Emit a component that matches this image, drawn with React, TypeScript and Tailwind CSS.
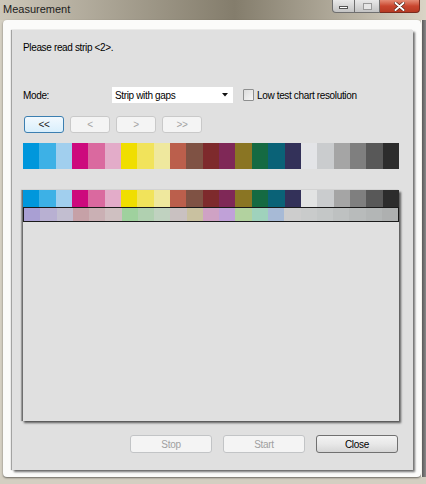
import React from 'react'

const STRIP = [
  '#0097dc', '#3db1e6', '#a1cfee', '#cd0a7d', '#da699f', '#e3acc9',
  '#f0de00', '#f1e35b', '#efe89e', '#bb5f4c', '#7f5244', '#7e2a2c',
  '#7f2857', '#8a7523', '#156a42', '#0a6277', '#333159', '#e3e4e7',
  '#caccce', '#a5a5a5', '#7f7f7f', '#585858', '#2c2c2c',
]

const READINGS = [
  '#a99fd3', '#b8b0d2', '#c2bed0', '#c6a1a7', '#cab0b4', '#cfc0c1',
  '#9fd19e', '#b0d0b0', '#c0d2c0', '#c9c1c1', '#c9c1a0', '#cfa2c4',
  '#c0a1d8', '#b2d29f', '#9fd2bc', '#a7bad6', '#cdcdcd', '#c9cbcb',
  '#c4c7c7', '#bec1c1', '#b8bbbb', '#b3b6b6', '#aeb0b0',
]

const font = { fontFamily: '"Liberation Sans", Arial, sans-serif' }

function NavButton({ label, active }: { label: string; active?: boolean }) {
  return (
    <div
      className={`w-[40px] h-[17px] flex items-center justify-center rounded-[3px] border text-[10px] ${
        active
          ? 'border-[#3c7fb1] bg-gradient-to-b from-[#f2f9fe] to-[#d9effc] text-[#1b1b1b]'
          : 'border-[#c9c9c9] bg-[#f4f4f4] text-[#a3a3a3]'
      }`}
    >
      {label}
    </div>
  )
}

function DialogButton({ label, enabled }: { label: string; enabled?: boolean }) {
  return (
    <div
      className={`w-[82px] h-[18px] flex items-center justify-center rounded-[3px] border text-[10px] tracking-[-0.3px] ${
        enabled
          ? 'border-[#707070] bg-gradient-to-b from-[#f3f3f3] via-[#e8e8e8] to-[#d6d6d6] text-black'
          : 'border-[#c2c4c6] bg-[#f4f4f4] text-[#a0a0a0]'
      }`}
    >
      {label}
    </div>
  )
}

function Strip({ colors, className }: { colors: string[]; className: string }) {
  return (
    <div className={`flex ${className}`}>
      {colors.map((c, i) => (
        <div key={i} className="flex-1" style={{ background: c }} />
      ))}
    </div>
  )
}

export default function App() {
  return (
    <div className="w-[426px] h-[484px] bg-[#d4cfc2] flex flex-col overflow-hidden" style={font}>
      {/* Title bar */}
      <div className="h-[20px] flex items-start justify-between bg-gradient-to-r from-[#cdc7b9] via-[#847d6c] via-55% to-[#dad4c6]">
        <span className="pl-[3px] pt-[3px] text-[11px] leading-[12px] text-[#1c1c1c]">Measurement</span>
        <div className="flex pr-[6px]">
          <div className="w-[23px] h-[13px] border border-t-0 border-[#6f6f6f] rounded-bl-[4px] bg-gradient-to-b from-[#e9e9e9] to-[#c4c4c4] flex items-end justify-center pb-[3px]">
            <div className="w-[9px] h-[3px] bg-white border border-[#555]" />
          </div>
          <div className="w-[25px] h-[13px] border border-t-0 border-l-0 border-[#6f6f6f] bg-gradient-to-b from-[#e9e9e9] to-[#c4c4c4] flex items-center justify-center">
            <div className="w-[9px] h-[7px] border border-[#9a9a9a] bg-[#e6e6e6]" />
          </div>
          <div className="w-[40px] h-[13px] border border-t-0 border-l-0 border-[#7a2b1e] rounded-br-[4px] bg-gradient-to-b from-[#e48c76] via-[#c9462f] to-[#b73a23] flex items-center justify-center">
            <svg width="11" height="9" viewBox="0 0 11 9">
              <path d="M1.5 1 L9.5 8 M9.5 1 L1.5 8" stroke="#4a1a10" strokeWidth="3.2" strokeLinecap="round" />
              <path d="M1.5 1 L9.5 8 M9.5 1 L1.5 8" stroke="#ffffff" strokeWidth="2" strokeLinecap="round" />
            </svg>
          </div>
        </div>
      </div>

      {/* Frame body */}
      <div className="flex h-[457px]">
        <div className="w-[3px]" />
        <div className="w-[418px] bg-[#fbfbfa] rounded-[4px] pt-[10px] pl-[9px] shadow-[0_1px_2px_rgba(0,0,0,0.5)]">
          {/* Client panel */}
          <div className="w-[401px] h-[440px] bg-[#e0e0e0] pt-[12px] px-[11px] text-[10px] text-black shadow-[-1px_0_1px_rgba(0,0,0,0.35),2px_2px_2px_rgba(0,0,0,0.55)] tracking-[-0.35px]">
            <div className="h-[12px] leading-[12px]">Please read strip &lt;2&gt;.</div>

            <div className="mt-[33px] h-[16px] flex items-center">
              <span className="w-[89px]">Mode:</span>
              <div className="w-[121px] h-[16px] bg-white flex items-center justify-between pl-[3px] pr-[5px]">
                <span>Strip with gaps</span>
                <svg width="6" height="4" viewBox="0 0 6 4">
                  <path d="M0 0 H6 L3 3.5 Z" fill="#111" />
                </svg>
              </div>
              <div className="ml-[10px] w-[11px] h-[12px] border border-[#8e8f8f] rounded-[1px] bg-gradient-to-br from-[#dcdcdc] to-[#f6f6f6]" />
              <span className="ml-[3px]">Low test chart resolution</span>
            </div>

            <div className="mt-[13px] ml-[1px] flex gap-[6px]">
              <NavButton label="<<" active />
              <NavButton label="<" />
              <NavButton label=">" />
              <NavButton label=">>" />
            </div>

            <Strip colors={STRIP} className="mt-[10px] w-[376px] h-[26px]" />

            {/* Reading panel */}
            <div className="mt-[21px] -ml-[1px] w-[377px] h-[231px] bg-[#e0e0e0] border-l border-[#6f6f6f] shadow-[-1px_0_1px_rgba(0,0,0,0.3),2px_2px_2px_rgba(0,0,0,0.6)]">
              <Strip colors={STRIP.map((c, i) => (i === 17 ? '#e2e3e3' : c))} className="w-[376px] h-[17px]" />
              <Strip colors={READINGS} className="w-[376px] h-[15px] border border-[#1a1a1a]" />
            </div>

            <div className="mt-[14px] flex gap-[11px] pl-[107px]">
              <DialogButton label="Stop" />
              <DialogButton label="Start" />
              <DialogButton label="Close" enabled />
            </div>
          </div>
        </div>
        <div className="w-[1px] bg-[#f2f0ea]" />
        <div className="flex-1 bg-gradient-to-r from-[#5a5a5a] to-[#8a8a8a]" />
      </div>
    </div>
  )
}
